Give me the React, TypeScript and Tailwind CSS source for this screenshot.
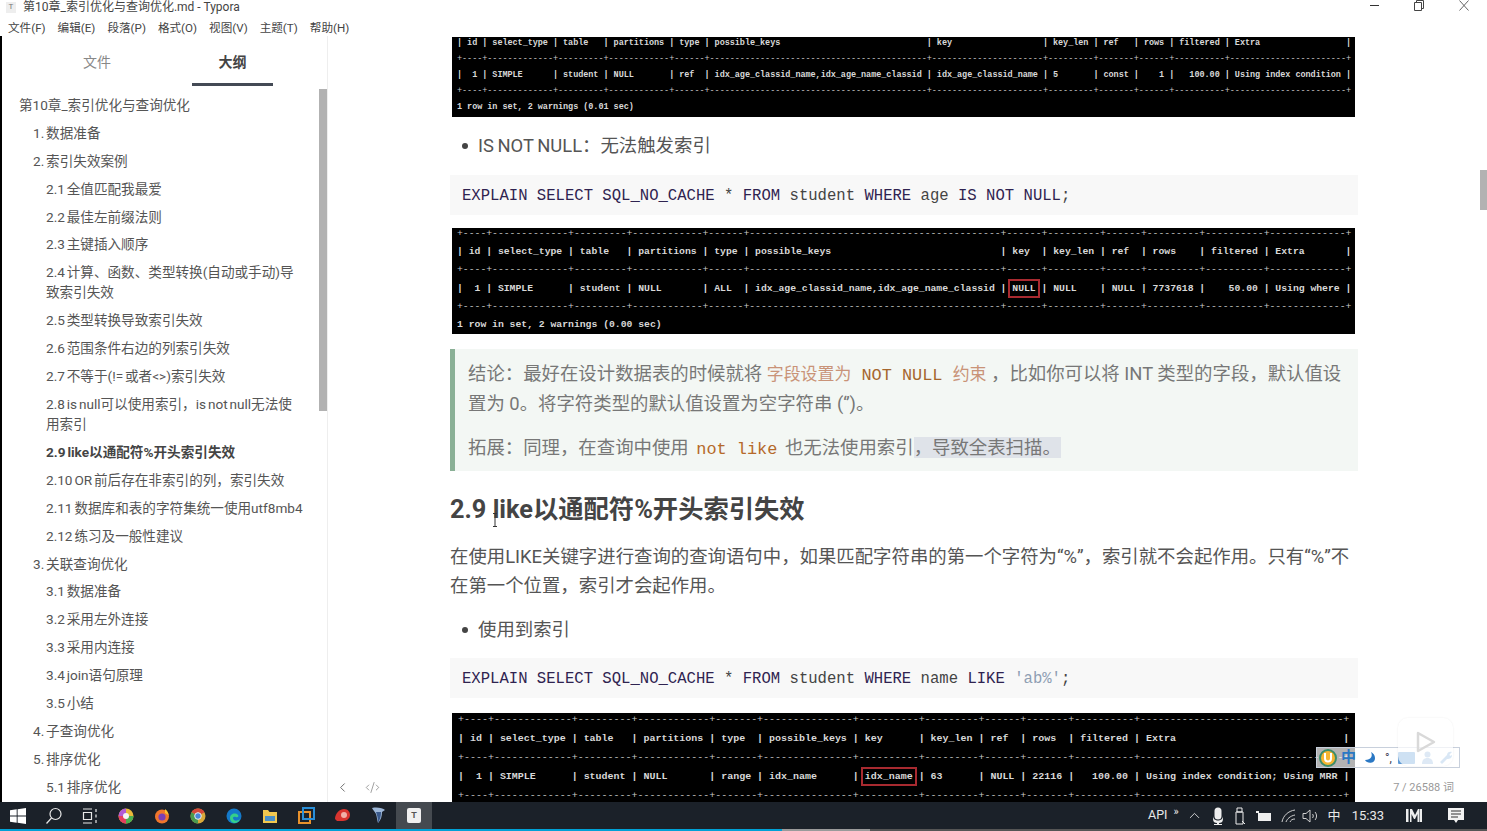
import { ReactNode } from 'react'
import { ChevronLeft, ChevronUp, CodeXml } from 'lucide-react'

const outline: { text: string; level: number; bold?: boolean }[] = [
  { text: '第10章_索引优化与查询优化', level: 0 },
  { text: '1. 数据准备', level: 1 },
  { text: '2. 索引失效案例', level: 1 },
  { text: '2.1 全值匹配我最爱', level: 2 },
  { text: '2.2 最佳左前缀法则', level: 2 },
  { text: '2.3 主键插入顺序', level: 2 },
  { text: '2.4 计算、函数、类型转换(自动或手动)导\n致索引失效', level: 2 },
  { text: '2.5 类型转换导致索引失效', level: 2 },
  { text: '2.6 范围条件右边的列索引失效', level: 2 },
  { text: '2.7 不等于(!= 或者<>)索引失效', level: 2 },
  { text: '2.8 is null可以使用索引，is not null无法使\n用索引', level: 2 },
  { text: '2.9 like以通配符%开头索引失效', level: 2, bold: true },
  { text: '2.10 OR 前后存在非索引的列，索引失效', level: 2 },
  { text: '2.11 数据库和表的字符集统一使用utf8mb4', level: 2 },
  { text: '2.12 练习及一般性建议', level: 2 },
  { text: '3. 关联查询优化', level: 1 },
  { text: '3.1 数据准备', level: 2 },
  { text: '3.2 采用左外连接', level: 2 },
  { text: '3.3 采用内连接', level: 2 },
  { text: '3.4 join语句原理', level: 2 },
  { text: '3.5 小结', level: 2 },
  { text: '4. 子查询优化', level: 1 },
  { text: '5. 排序优化', level: 1 },
  { text: '5.1 排序优化', level: 2 },
]

const menus = ['文件(F)', '编辑(E)', '段落(P)', '格式(O)', '视图(V)', '主题(T)', '帮助(H)']

function Shot({ className, children }: { className: string; children: ReactNode }) {
  return (
    <div className={`ml-[2px] mr-[3px] overflow-hidden bg-black ${className}`}>
      <pre className="font-['Liberation_Mono',monospace] font-bold text-[#d8d8d8]">{children}</pre>
    </div>
  )
}

function Sep({ line }: { line: string }) {
  return <div className="font-normal text-[#c8c8c8]">{line}</div>
}

function Mark({ children }: { children: ReactNode }) {
  return <span className="outline-2 outline-offset-2 outline-[#a82a30]">{children}</span>
}

function Kw({ children }: { children: ReactNode }) {
  return <span className="text-[#2f2350]">{children}</span>
}

function CodeLine({ children }: { children: ReactNode }) {
  return (
    <div className="h-[40px] bg-[#f8f8f8] pl-[12px] font-['Liberation_Mono',monospace] text-[15.6px] leading-[42px] text-[#444]">
      {children}
    </div>
  )
}

function Bullet({ children }: { children: ReactNode }) {
  return (
    <div className="flex h-[30px] items-center pl-[12px] text-[18.4px] text-[#555] [word-spacing:-1px]">
      <span className="mr-[10px] h-[6px] w-[6px] rounded-full bg-[#444]" />
      <span>{children}</span>
    </div>
  )
}

function TaskIcon({ children, active }: { children: ReactNode; active?: boolean }) {
  return (
    <div className={`flex h-[27px] w-[36px] items-center justify-center ${active ? 'bg-[#454a50]' : ''}`}>
      {children}
    </div>
  )
}

function TaskbarLeft() {
  return (
    <div className="flex items-center">
      <TaskIcon>
        <svg width="16" height="16" viewBox="0 0 16 16" fill="#fff">
          <path d="M0 2.3 6.7 1.3v6.3H0zM7.6 1.2 16 0v7.6H7.6zM0 8.4h6.7v6.3L0 13.7zM7.6 8.4H16V16l-8.4-1.2z" />
        </svg>
      </TaskIcon>
      <TaskIcon>
        <svg width="18" height="18" viewBox="0 0 18 18" fill="none" stroke="#e8e8e8" strokeWidth="1.2">
          <circle cx="10.5" cy="7" r="5.5" />
          <path d="M6.5 11 1.5 16.5" />
        </svg>
      </TaskIcon>
      <TaskIcon>
        <svg width="16" height="16" viewBox="0 0 16 16" fill="none" stroke="#e8e8e8" strokeWidth="1.2">
          <path d="M1 1h9M1 15h9M1.5 4.500h8v7h-8zM14 1v3M14 6.500v3M14 12v3" />
        </svg>
      </TaskIcon>
      <TaskIcon>
        <svg width="16" height="16" viewBox="0 0 16 16">
          <circle cx="8" cy="8" r="7.500" fill="#e9b93a" />
          <path d="M8 8 15.500 8A7.500 7.500 0 0 1 8 15.500z" fill="#4caf50" />
          <path d="M8 8 8 15.500A7.500 7.500 0 0 1 .5 8z" fill="#e53f5f" />
          <path d="M8 8 .5 8A7.500 7.500 0 0 1 8 .5z" fill="#b25bd6" />
          <circle cx="8" cy="8" r="3" fill="#f4f4f4" />
        </svg>
      </TaskIcon>
      <TaskIcon>
        <svg width="16" height="16" viewBox="0 0 16 16">
          <circle cx="8" cy="8.500" r="7" fill="#f0762c" />
          <path d="M11 1c2 1.500 3.500 4 3.500 6L11 5z" fill="#f9c22e" />
          <circle cx="8" cy="9" r="3.600" fill="#7a3fb5" />
        </svg>
      </TaskIcon>
      <TaskIcon>
        <svg width="16" height="16" viewBox="0 0 16 16">
          <circle cx="8" cy="8" r="7.500" fill="#d9a93a" />
          <path d="M8 8 1.500 4.300A7.500 7.500 0 0 1 14.500 4.300z" fill="#d6483b" />
          <path d="M8 8 8 15.500A7.500 7.500 0 0 1 1.500 4.300z" fill="#4a9a4e" />
          <circle cx="8" cy="8" r="3.300" fill="#4a86d8" stroke="#eee" strokeWidth="1" />
        </svg>
      </TaskIcon>
      <TaskIcon>
        <svg width="16" height="16" viewBox="0 0 16 16">
          <circle cx="8" cy="8" r="7.500" fill="#1479c9" />
          <path d="M4 10c0-4 5-6 8-3 1 1 0 3-2 2-3-1-4 1-2 3 1 1 4 1 6-1-1 3-4 4.500-6 4C5 14.500 4 12 4 10z" fill="#35d08a" />
        </svg>
      </TaskIcon>
      <TaskIcon>
        <svg width="16" height="16" viewBox="0 0 16 16">
          <path d="M1 2h5l1.500 2H15v11H1z" fill="#f2c84f" />
          <path d="M3 8h10v5H3z" fill="#4a90c8" />
        </svg>
      </TaskIcon>
      <TaskIcon>
        <svg width="17" height="17" viewBox="0 0 17 17" fill="none">
          <rect x="1" y="5" width="11" height="11" stroke="#e8912c" strokeWidth="2" />
          <rect x="5" y="1" width="11" height="11" stroke="#2a8fd8" strokeWidth="2" />
        </svg>
      </TaskIcon>
      <TaskIcon>
        <svg width="17" height="15" viewBox="0 0 17 15">
          <path d="M1 11C1 5 6 1 10 1s6 3 6 6-3 6-7 6H3z" fill="#d8342f" />
          <circle cx="10" cy="7" r="3" fill="#f1b0a8" />
        </svg>
      </TaskIcon>
      <TaskIcon>
        <svg width="15" height="17" viewBox="0 0 15 17">
          <path d="M1 1c5-1 11 0 13 2l-3 2c0 4-1 8-4 11-1-3-1-6-2-9C4 5 2 3 1 1z" fill="#9db7d8" />
          <path d="M5 5c1 3 2 6 2 11 2-3 3-7 3-11z" fill="#39598c" />
        </svg>
      </TaskIcon>
      <TaskIcon active>
        <div className="flex h-[15px] w-[14px] items-center justify-center rounded-[2px] bg-[#f0f0f0] font-['Liberation_Sans',sans-serif] text-[9px] font-bold text-[#555]">
          T
        </div>
      </TaskIcon>
    </div>
  )
}

function Tray() {
  return (
    <div className="flex items-center pr-[23px] text-[#e8e8e8]">
      <span className="text-[12.5px]">API</span>
      <span className="mb-[8px] ml-[6px] text-[11px] leading-none">»</span>
      <ChevronUp size={17} strokeWidth={1.2} className="ml-[7px]" />
      <svg className="ml-[9px]" width="12" height="18" viewBox="0 0 12 18" fill="#eee">
        <rect x="2.500" y="0.500" width="7" height="12" rx="3.500" />
        <path d="M1 9c0 6 10 6 10 0v3c0 3-2 4-4 4v1h3v1H2v-1h3v-1c-2 0-4-1-4-4z" />
      </svg>
      <svg className="ml-[10px]" width="12" height="18" viewBox="0 0 12 18" fill="none" stroke="#eee" strokeWidth="1">
        <path d="M3 1h5v4H3zM2 5h7v12H2z" />
        <path d="M8 14l3 3" />
      </svg>
      <svg className="ml-[10px]" width="16" height="12" viewBox="0 0 16 12" fill="#eee">
        <path d="M0 1h3v2H0zM2 3h13v8H2z" />
      </svg>
      <svg className="ml-[9px]" width="15" height="14" viewBox="0 0 15 14" fill="none" stroke="#cfcfcf" strokeWidth="1">
        <path d="M1 13C2 7 7 2 14 1M5 13c1-3 4-6 9-7M9 13c1-2 2-3 5-3" />
      </svg>
      <svg className="ml-[6px]" width="16" height="14" viewBox="0 0 16 14" fill="none" stroke="#cfcfcf" strokeWidth="1">
        <path d="M1 4.500h3l4-3.500v12L4 9.500H1zM10.500 5c1 1.200 1 2.800 0 4M13 3c2 2.400 2 5.600 0 8" />
      </svg>
      <span className="ml-[10px] text-[13px]">中</span>
      <span className="ml-[11px] text-[13px]">15:33</span>
      <svg className="ml-[22px]" width="16" height="13" viewBox="0 0 16 13" fill="#eee">
        <path d="M0 0h2.500v13H0zM4 0h2l3 6 3-6h1.500v13h-2V5L9 10h-1L5.500 5v8H4zM14 0h2v13h-2z" />
      </svg>
      <svg className="ml-[26px]" width="16" height="16" viewBox="0 0 16 16" fill="#f2f2f2">
        <path d="M0 0h16v12h-6l-2 3-2-3H0z" />
        <path d="M3 3h10M3 6h10M3 9h7" stroke="#333" strokeWidth="1" />
      </svg>
    </div>
  )
}

const sep1 = '+----+-------------+---------+------------+------+-------------------------------------------+----------------------+---------+-------+------+----------+-----------------------+'
const sep2 = '+----+-------------+---------+------------+------+-------------------------------------------+------+---------+------+---------+----------+-------------+'
const sep3 = '+----+-------------+---------+------------+-------+---------------+----------+---------+------+-------+----------+----------------------------------+'

export default function App() {
  return (
    <div className="relative flex h-[831px] w-[1487px] flex-col overflow-hidden bg-white font-['Roboto','Noto_Sans_CJK_SC',sans-serif] text-[#444]">
      <header className="relative h-[36px] shrink-0">
        <div className="flex h-[14px] items-center gap-[7px] pl-[6px]">
          <span className="flex h-[11px] w-[10px] items-center justify-center bg-[#eee] text-[8px] text-[#777]">T</span>
          <span className="text-[12px] leading-[14px] text-[#444]">第10章_索引优化与查询优化.md - Typora</span>
        </div>
        <nav className="mt-[6px] flex gap-[12px] pl-[8px] text-[11.6px] leading-[17px] text-[#444]">
          {menus.map((m) => (
            <span key={m}>{m}</span>
          ))}
        </nav>
        <div className="absolute right-[18px] top-0 flex items-start gap-[35px]">
          <div className="mt-[5px] h-[1px] w-[9px] bg-[#333]" />
          <svg width="10" height="11" viewBox="0 0 10 11" fill="none" stroke="#444">
            <path d="M.5 2.500h7v8h-7zM2.500 2.500V.5h7v8h-2" />
          </svg>
          <svg width="10" height="11" viewBox="0 0 10 11" fill="none" stroke="#555" strokeWidth=".9">
            <path d="M.5.5 9.500 10.500M9.500.5.5 10.500" />
          </svg>
        </div>
      </header>

      <div className="relative flex min-h-0 flex-1">
        <aside className="relative flex w-[328px] shrink-0 flex-col overflow-hidden border-r border-[#eee] border-l-2 border-l-black">
          <div className="relative flex h-[55px] shrink-0 text-[14px]">
            <div className="w-[190px] pt-[16px] text-center text-[#888]">文件</div>
            <div className="mb-[5px] w-[81px] border-b-[3px] border-[#444a55] pt-[16px] text-center font-bold text-[#444]">大纲</div>
          </div>
          <div className="[word-spacing:-1.5px]">
            {outline.map((o) => (
              <div
                key={o.text}
                className={`whitespace-pre-line py-[3.96px] text-[13.6px] leading-[20px] ${
                  o.level === 0 ? 'pl-[17px]' : o.level === 1 ? 'pl-[31px]' : 'pl-[44px]'
                } ${o.bold ? 'font-bold text-[#444]' : 'text-[#555]'}`}
              >
                {o.text}
              </div>
            ))}
          </div>
          <div className="absolute right-0 top-[53px] h-[322px] w-[8px] bg-[#b2b2b2]" />
        </aside>

        <main className="min-w-0 flex-1 overflow-hidden pl-[122px] pr-[129px] pt-[1px]">
          <Shot className="h-[80px] text-[8.5px] tracking-[-0.05px]">
            <div className="-mt-[2px] pl-[5px] leading-[16px]">
              <div>| id | select_type | table   | partitions | type | possible_keys                             | key                  | key_len | ref   | rows | filtered | Extra                 |</div>
              <Sep line={sep1} />
              <div>|  1 | SIMPLE      | student | NULL       | ref  | idx_age_classid_name,idx_age_name_classid | idx_age_classid_name | 5       | const |    1 |   100.00 | Using index condition |</div>
              <Sep line={sep1} />
              <div>1 row in set, 2 warnings (0.01 sec)</div>
            </div>
          </Shot>

          <div className="mt-[14px]">
            <Bullet>IS NOT NULL：无法触发索引</Bullet>
          </div>

          <div className="mt-[14px]">
            <CodeLine>
              <Kw>EXPLAIN SELECT SQL_NO_CACHE</Kw> * <Kw>FROM</Kw> student <Kw>WHERE</Kw> age <Kw>IS NOT NULL</Kw>;
            </CodeLine>
          </div>

          <Shot className="mt-[13px] h-[106px] text-[9.77px] tracking-[-0.015px]">
            <div className="-mt-[3px] pl-[5px] leading-[18.2px]">
              <Sep line={sep2} />
              <div>| id | select_type | table   | partitions | type | possible_keys                             | key  | key_len | ref  | rows    | filtered | Extra       |</div>
              <Sep line={sep2} />
              <div>
                |  1 | SIMPLE      | student | NULL       | ALL  | idx_age_classid_name,idx_age_name_classid | <Mark>NULL</Mark> | NULL    | NULL | 7737618 |    50.00 | Using where |
              </div>
              <Sep line={sep2} />
              <div>1 row in set, 2 warnings (0.00 sec)</div>
            </div>
          </Shot>

          <blockquote className="mt-[15px] h-[122px] border-l-[5px] border-[#8ab096] bg-[#f3f7f4] pl-[13px] pr-[16px] pt-[10px] text-[18.4px] leading-[30px] text-[#777]">
            <p>
              结论：最好在设计数据表的时候就将{' '}
              <span className="font-['Liberation_Mono','Noto_Sans_CJK_SC',monospace] text-[16.9px] leading-none text-[#a5662e]">
                <span className="text-[#c99378]">字段设置为</span> NOT NULL <span className="text-[#c99378]">约束</span>
              </span>{' '}
              ，比如你可以将 INT 类型的字段，默认值设置为 0。将字符类型的默认值设置为空字符串 (‘’)。
            </p>
            <p className="mt-[14px]">
              拓展：同理，在查询中使用 <span className="px-[3px] font-['Liberation_Mono',monospace] text-[16.9px] leading-none text-[#b5692a]">not like</span> 也无法使用索引
              <span className="bg-[#dfe3e9]">，导致全表扫描。</span>
            </p>
          </blockquote>

          <h2 className="mt-[21px] text-[25.3px] font-bold leading-[36px] text-[#444]">2.9 like以通配符%开头索引失效</h2>

          <p className="mt-[14px] text-[18.4px] leading-[29px] text-[#555]">
            在使用LIKE关键字进行查询的查询语句中，如果匹配字符串的第一个字符为“%”，索引就不会起作用。只有“%”不在第一个位置，索引才会起作用。
          </p>

          <div className="mt-[15px]">
            <Bullet>使用到索引</Bullet>
          </div>

          <div className="mt-[13px]">
            <CodeLine>
              <Kw>EXPLAIN SELECT SQL_NO_CACHE</Kw> * <Kw>FROM</Kw> student <Kw>WHERE</Kw> name <Kw>LIKE</Kw>{' '}
              <span className="text-[#8e9eb3]">'ab%'</span>;
            </CodeLine>
          </div>

          <Shot className="mt-[15px] h-[92px] text-[9.97px]">
            <div className="-mt-[3px] pl-[6px] leading-[19px]">
              <Sep line={sep3} />
              <div>| id | select_type | table   | partitions | type  | possible_keys | key      | key_len | ref  | rows  | filtered | Extra                            |</div>
              <Sep line={sep3} />
              <div>
                |  1 | SIMPLE      | student | NULL       | range | idx_name      | <Mark>idx_name</Mark> | 63      | NULL | 22116 |   100.00 | Using index condition; Using MRR |
              </div>
              <Sep line={sep3} />
            </div>
          </Shot>
        </main>

        {/* floating bits over the editor */}
        <div className="absolute left-[335px] top-[744px] flex items-center gap-[15px] text-[#666]">
          <ChevronLeft size={15} strokeWidth={1.5} />
          <CodeXml size={15} strokeWidth={1} />
        </div>
        <div className="absolute right-0 top-[134px] h-[40px] w-[7px] bg-[#b2b2b2]" />
        <svg className="absolute left-[492px] top-[477px]" width="6" height="14" viewBox="0 0 6 14" fill="none" stroke="#333">
          <path d="M1 .5h4M3 .5v13M1 13.500h4" />
        </svg>
        <div className="absolute bottom-[7px] right-[33px] text-[11px] leading-[14px] text-[#999]">7 / 26588 词</div>

        <div className="absolute left-[1316px] top-[711px] flex h-[21px] w-[144px] items-center gap-[4px] border border-[#c8d0dc] bg-white/70 pl-[2px] text-[#2a78c4]">
          <svg width="18" height="18" viewBox="0 0 18 18">
            <circle cx="9" cy="9" r="8" fill="#f6b531" stroke="#3b8d6b" strokeWidth="2" />
            <path d="M6 4v5.500a3 3 0 0 0 6 0V4" fill="none" stroke="#fff" strokeWidth="2" />
          </svg>
          <span className="text-[15px] font-bold leading-none">中</span>
          <svg className="ml-[4px]" width="12" height="12" viewBox="0 0 12 12" fill="#2a78c4">
            <path d="M7 0c2 4 0 8-6 8 2 4 10 4 10-2C11 3 9 1 7 0z" />
          </svg>
          <span className="ml-[5px] text-[12px] leading-none text-[#445]">°,</span>
          <svg className="ml-[2px]" width="17" height="12" viewBox="0 0 17 12" fill="#5d9ad6">
            <rect width="17" height="12" rx="1" />
          </svg>
          <svg className="ml-[3px]" width="11" height="13" viewBox="0 0 11 13" fill="#8fb6dc">
            <circle cx="5.500" cy="3.500" r="3" />
            <path d="M0 13c0-4 2-6 5.500-6S11 9 11 13z" />
          </svg>
          <svg className="ml-[3px]" width="13" height="13" viewBox="0 0 13 13" fill="#7fb0de">
            <path d="M0 11 7 4c0-3 3-4 5-3L9.500 3.500 10 5l2-1c0 3-2 4-5 4l-5 5z" />
          </svg>
        </div>

        {/* video site watermark */}
        <div className="absolute left-[1398px] top-[682px] flex h-[48px] w-[55px] items-center justify-center rounded-[10px] bg-white/70 shadow-[0_0_2px_rgba(0,0,0,0.08)]">
          <svg width="22" height="24" viewBox="0 0 22 24" fill="none" stroke="#d9d9d9" strokeWidth="2.500">
            <path d="M3 3 19 12 3 21z" strokeLinejoin="round" />
          </svg>
        </div>
      </div>

      <footer className="flex h-[29px] shrink-0 flex-col bg-[#1b2129]">
        <div className="flex h-[27px] items-center justify-between">
          <TaskbarLeft />
          <Tray />
        </div>
        <div className="flex h-[2px] bg-[#555]">
          <div className="w-[782px] bg-[#00a1d6]" />
          <div className="w-[88px] bg-[#9a9a9a]" />
        </div>
      </footer>
    </div>
  )
}
